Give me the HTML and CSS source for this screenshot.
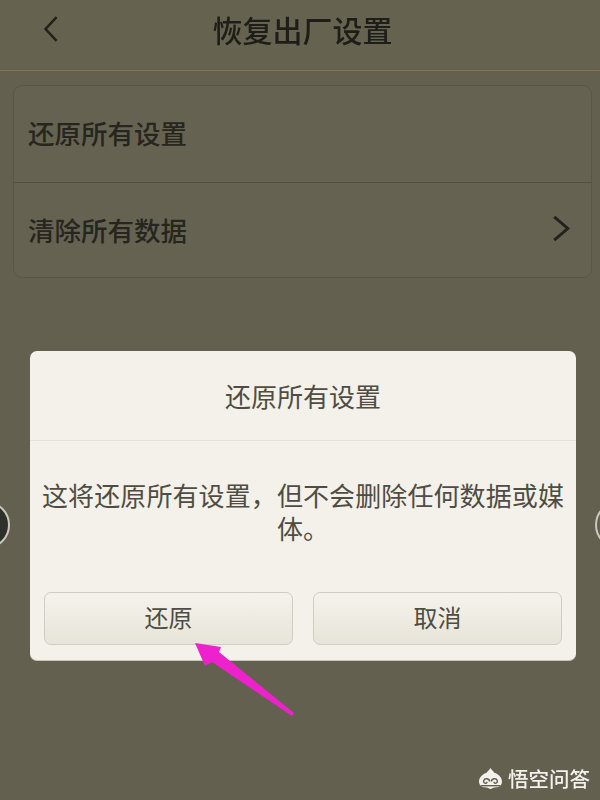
FILE: index.html
```html
<!DOCTYPE html>
<html lang="zh-CN">
<head>
<meta charset="utf-8">
<title>恢复出厂设置</title>
<link rel="stylesheet" href="styles.css">
</head>
<body>
<div class="screen">
  <div class="blurred">
    <header class="topbar">
      <svg class="back" viewBox="0 0 20 32" aria-hidden="true"><path d="M16 2 L3 16 L16 30" /></svg>
      <h1 class="title">恢复出厂设置</h1>
    </header>
    <main class="content">
      <ul class="card">
        <li class="row"><span class="row-label">还原所有设置</span></li>
        <li class="row"><span class="row-label">清除所有数据</span>
          <svg class="chevron" viewBox="0 0 20 28" aria-hidden="true"><path d="M3 2 L17 14 L3 26" /></svg>
        </li>
      </ul>
    </main>
    <div class="edge edge-left"></div>
    <div class="edge edge-right"></div>
    <section class="dialog">
      <h2 class="dialog-title">还原所有设置</h2>
      <p class="dialog-body">这将还原所有设置，但不会删除任何数据或媒体。</p>
      <div class="actions">
        <button class="btn">还原</button>
        <button class="btn">取消</button>
      </div>
    </section>
    <svg class="arrow" viewBox="0 0 600 800" aria-hidden="true"><polygon points="195,643 221,647 219,652 294,713 292,716 212,662 205,666" /></svg>
  </div>
  <div class="brand">
    <svg class="brand-icon" viewBox="0 0 26 24" aria-hidden="true">
      <path class="brand-fill" d="M13 1 C14 3 16 4 17 6 C21 7 25 11 25 15 C25 19 22 21 19 21 C17 21 15 22 13 23 C11 22 9 21 7 21 C4 21 1 19 1 15 C1 11 5 7 9 6 C10 4 12 3 13 1 Z" />
      <path class="brand-swirl" d="M12 15 C12 12 7 11 6 14 C5 17 9 18 9.5 15.5 M14 15 C14 12 19 11 20 14 C21 17 17 18 16.500 15.500" />
      <path class="brand-swirl" d="M3 19.500 H23" />
    </svg>
    <span class="brand-name">悟空问答</span>
  </div>
</div>
</body>
</html>
```
FILE: styles.css
```css
* { box-sizing: border-box; margin: 0; padding: 0; }
html, body { width: 600px; height: 800px; overflow: hidden; }
body { font-family: "Noto Sans CJK SC", "Liberation Sans", sans-serif; background: #63604f; }
.screen { position: relative; width: 600px; height: 800px; background: #63604f; overflow: hidden; }
.blurred { height: 800px; filter: blur(0.45px); }
.topbar { height: 71px; padding-left: 43px; display: flex; align-items: center; border-bottom: 1px solid #84704a; background: #656250; }
.back { width: 17px; height: 30px; margin-top: -13px; flex: none; }
.back path, .chevron path { fill: none; stroke: #22221c; stroke-width: 3; }
.title { position: absolute; left: 0; right: 0; top: 7px; text-align: center; padding-left: 5px; font-size: 30px; line-height: 44px; font-weight: 500; color: #1e1e19; }
.content { padding: 14px 8px 0 13px; }
.card { list-style: none; height: 193px; border: 1px solid #595648; border-radius: 9px; background: #656251; }
.row { height: 96px; padding: 0 20px 0 14px; display: flex; align-items: center; justify-content: space-between; font-size: 26.500px; font-weight: 500; color: #26261f; }
.row-label { margin-bottom: 3px; }
.row + .row { border-top: 1px solid #524f43; }
.chevron { width: 20px; height: 27px; margin-bottom: 4px; }
.edge { position: absolute; top: 501px; width: 48px; height: 48px; border-radius: 50%; border: 2px solid #c9c8bd; background: #2d302b; }
.edge-left { left: -38px; }
.edge-right { left: 595px; background: #63604f; }
.dialog { position: absolute; left: 30px; top: 351px; width: 546px; height: 310px; border-radius: 7px; background: #f3f1e9; border-bottom: 1px solid #c8c6b8; display: flex; flex-direction: column; }
.dialog-title { height: 90px; display: flex; align-items: center; justify-content: center; border-bottom: 1px solid #e6e4da; font-size: 26px; font-weight: 400; color: #4f4d43; }
.dialog-body { padding: 37px 12px 0; height: 151px; text-align: center; font-size: 26px; line-height: 33px; color: #4f4d43; letter-spacing: 0.1px; }
.actions { display: flex; gap: 20px; padding: 0 14px; }
.btn { flex: 1; height: 53px; border: 1px solid #d0cec2; border-radius: 7px; background: linear-gradient(#f4f2ea, #e7e5da); font-family: inherit; font-size: 24px; color: #4f4d43; padding-bottom: 4px; }
.arrow { position: absolute; left: 0; top: 0; width: 600px; height: 800px; }
.arrow polygon { fill: #ee22cc; }
.brand { position: absolute; left: 478px; top: 766px; display: flex; align-items: center; gap: 5px; color: #f2f1ec; }
.brand-icon { width: 25px; height: 23px; }
.brand-fill { fill: #f2f1ec; }
.brand-swirl { fill: none; stroke: #63604f; stroke-width: 1.500; }
.brand-name { font-size: 20.500px; line-height: 24px; white-space: nowrap; font-weight: 500; }
```
